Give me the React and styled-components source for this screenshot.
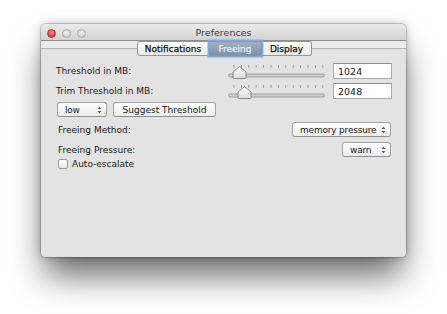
import React from 'react'
import styled, { createGlobalStyle } from 'styled-components'

const Global = createGlobalStyle`
  body {
    margin: 0;
    background: #fff;
    font-family: "DejaVu Sans", "Lucida Grande", sans-serif;
    font-size: 9px;
    color: #1a1a1a;
  }
`

const Stage = styled.div`
  padding: 24px 0 0 41px;
  height: 314px;
  box-sizing: border-box;
`

const Window = styled.div`
  width: 365px;
  height: 233px;
  display: flex;
  flex-direction: column;
  background: #e3e3e3;
  border-radius: 5px 5px 4px 4px;
  box-shadow: 0 22px 34px -4px rgba(0, 0, 0, 0.6), 0 0 10px rgba(0, 0, 0, 0.22),
    0 0 0 1px rgba(0, 0, 0, 0.18);
  overflow: hidden;
`

const TitleBar = styled.div`
  height: 16px;
  display: grid;
  grid-template-columns: 1fr auto 1fr;
  align-items: center;
  background: linear-gradient(#ebebeb, #d2d2d2);
  border-bottom: 1px solid #8e8e8e;
`

const Lights = styled.div`
  display: flex;
  gap: 6px;
  padding-left: 6px;
  margin-top: 3px;
`

const Light = styled.span`
  width: 9px;
  height: 9px;
  border-radius: 50%;
  box-sizing: border-box;
  border: 1px solid ${p => (p.$red ? '#b03a3a' : '#a8a8a8')};
  background: ${p =>
    p.$red
      ? 'radial-gradient(circle at 50% 35%, #ff9a9a, #e0403f 60%, #c42a2a)'
      : 'radial-gradient(circle at 50% 35%, #f4f4f4, #d6d6d6 60%, #c2c2c2)'};
`

const Title = styled.div`
  color: #3e3e3e;
  font-size: 9.5px;
  padding-top: 1px;
`

const TabStrip = styled.div`
  height: 16px;
  display: flex;
  justify-content: center;
  padding-left: 2px;
  background: linear-gradient(#ececec 0 7px, #b2b2b2 7px 8px, #e3e3e3 8px);
`

const Tab = styled.div`
  width: ${p => p.$w}px;
  height: 15px;
  box-sizing: border-box;
  display: flex;
  align-items: center;
  justify-content: center;
  border: 1px solid #959595;
  border-left-width: ${p => (p.$first ? 1 : 0)}px;
  border-radius: ${p => (p.$first ? '3px 0 0 3px' : p.$last ? '0 3px 3px 0' : '0')};
  background: ${p => (p.$active ? 'linear-gradient(#a3b1c2, #7f90a6)' : 'linear-gradient(#ffffff, #ececec)')};
  color: ${p => (p.$active ? '#e9eef4' : '#111')};
  box-shadow: ${p => (p.$active ? '0 0 0 1.5px #7eaee0' : 'none')};
  position: relative;
  z-index: ${p => (p.$active ? 1 : 0)};
  -webkit-text-stroke: 0.25px currentColor;
`

const Panel = styled.div`
  padding: 6px 14px 0 15px;
  display: flex;
  flex-direction: column;
`

const Row = styled.div`
  display: flex;
  align-items: center;
  height: ${p => p.$h || 16}px;
  margin-top: ${p => p.$mt || 0}px;
`

const Label = styled.div`
  flex: 1;
  padding-left: ${p => p.$pl || 0}px;
`

const Field = styled.div`
  width: 59px;
  height: 16px;
  box-sizing: border-box;
  margin-left: 8px;
  background: #fff;
  border: 1px solid #a9a9a9;
  border-top-color: #8c8c8c;
  padding: 2px 0 0 4px;
  font-size: 9.5px;
`

const Popup = styled.div`
  width: ${p => p.$w}px;
  height: ${p => p.$h || 15}px;
  box-sizing: border-box;
  margin-left: ${p => p.$ml || 0}px;
  margin-right: ${p => p.$mr || 0}px;
  display: flex;
  align-items: center;
  justify-content: space-between;
  padding: 0 4px 0 7px;
  white-space: nowrap;
  letter-spacing: -0.2px;
  background: linear-gradient(#ffffff, #ededed);
  border: 1px solid #a3a3a3;
  border-bottom-color: #8f8f8f;
  border-radius: 3px;
`

const PushButton = styled.div`
  width: ${p => p.$w}px;
  height: 15px;
  box-sizing: border-box;
  margin-left: ${p => p.$ml || 0}px;
  display: flex;
  align-items: center;
  justify-content: center;
  background: linear-gradient(#ffffff, #ededed);
  border: 1px solid #a3a3a3;
  border-bottom-color: #8f8f8f;
  border-radius: 3px;
`

const Check = styled.span`
  width: 10px;
  height: 10px;
  box-sizing: border-box;
  margin-left: 2px;
  margin-right: 4px;
  border: 1px solid #9a9a9a;
  border-radius: 2px;
  background: linear-gradient(#ffffff, #e6e6e6);
`

const Arrows = () => (
  <svg width="5" height="8" viewBox="0 0 5 8">
    <path d="M0.5 3 L2.5 0.8 L4.5 3 Z M0.5 5 L2.5 7.2 L4.5 5 Z" fill="#555" />
  </svg>
)

function Slider({ value }) {
  const ticks = Array.from({ length: 13 }, (_, i) => 5.5 + i * 7.4)
  const cx = value
  return (
    <svg width="97" height="16" viewBox="0 0 97 16">
      <defs>
        <linearGradient id="knob" x1="0" y1="0" x2="0" y2="1">
          <stop offset="0" stopColor="#ffffff" />
          <stop offset="1" stopColor="#dcdcdc" />
        </linearGradient>
      </defs>
      {ticks.map(x => (
        <rect key={x} x={x} y="2" width="1" height="3" fill="#9a9a9a" />
      ))}
      <rect x="0.5" y="11" width="96" height="3" rx="1.5" fill="#cfcfcf" stroke="#8f8f8f" strokeWidth="0.8" />
      <path
        d={`M${cx - 6} 15.5 L${cx + 6} 15.5 Q${cx + 6.5} 15.5 ${cx + 6.5} 15 L${cx + 6.5} 9 L${cx} 3.5 L${cx - 6.5} 9 L${cx - 6.5} 15 Q${cx - 6.5} 15.5 ${cx - 6} 15.5 Z`}
        fill="url(#knob)"
        stroke="#808080"
        strokeWidth="0.9"
      />
    </svg>
  )
}

export default function App() {
  return (
    <>
      <Global />
      <Stage>
        <Window>
          <TitleBar>
            <Lights>
              <Light $red />
              <Light />
              <Light />
            </Lights>
            <Title>Preferences</Title>
            <div />
          </TitleBar>
          <TabStrip>
            <Tab $w={72} $first>Notifications</Tab>
            <Tab $w={53} $active>Freeing</Tab>
            <Tab $w={50} $last>Display</Tab>
          </TabStrip>
          <Panel>
            <Row>
              <Label>Threshold in MB:</Label>
              <Slider value={11.5} />
              <Field>1024</Field>
            </Row>
            <Row $mt={4}>
              <Label>Trim Threshold in MB:</Label>
              <Slider value={16.5} />
              <Field>2048</Field>
            </Row>
            <Row $mt={3} $h={15}>
              <Popup $w={50} $ml={1}>
                <span>low</span>
                <Arrows />
              </Popup>
              <PushButton $w={103} $ml={6}>Suggest Threshold</PushButton>
            </Row>
            <Row $mt={5} $h={15}>
              <Label $pl={2}>Freeing Method:</Label>
              <Popup $w={99} $mr={1}>
                <span>memory pressure</span>
                <Arrows />
              </Popup>
            </Row>
            <Row $mt={5} $h={15}>
              <Label $pl={2}>Freeing Pressure:</Label>
              <Popup $w={49} $mr={1}>
                <span>warn</span>
                <Arrows />
              </Popup>
            </Row>
            <Row $mt={1} $h={11}>
              <Check />
              <span>Auto-escalate</span>
            </Row>
          </Panel>
        </Window>
      </Stage>
    </>
  )
}
